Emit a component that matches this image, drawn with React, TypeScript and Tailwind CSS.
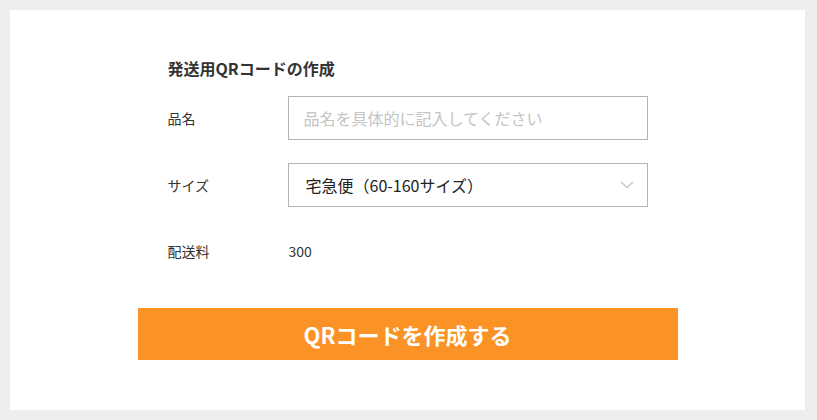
import React from 'react';

const font = { fontFamily: '"Noto Sans CJK JP", "Noto Sans", sans-serif' };

function Chevron() {
  return (
    <svg width="14" height="8" viewBox="0 0 14 8" className="shrink-0">
      <polyline points="1,1 7,6.5 13,1" fill="none" stroke="#c8c8c8" strokeWidth="1.5" />
    </svg>
  );
}

export default function App() {
  return (
    <div className="min-h-[420px] w-[817px] bg-[#eeeeee] pt-[10px] pl-[10px] pr-[12px] pb-[10px]" style={font}>
      <div className="bg-white h-[400px] flex flex-col items-center pt-[48px]">
        <div className="w-[480px]">
          <h2 className="text-[16px] leading-[20px] font-bold text-[#333]">発送用QRコードの作成</h2>

          <div className="mt-[18px] flex items-center h-[44px]">
            <div className="w-[120px] text-[14px] text-[#333]">品名</div>
            <input
              className="w-[360px] h-[44px] border border-[#b4b4b4] px-[15px] text-[16px] text-[#333] placeholder:text-[#c4c4c4] outline-none"
              placeholder="品名を具体的に記入してください"
            />
          </div>

          <div className="mt-[23px] flex items-center h-[44px]">
            <div className="w-[120px] text-[14px] text-[#333]">サイズ</div>
            <div className="w-[360px] h-[44px] border border-[#b4b4b4] pl-[17px] pr-[13px] flex items-center justify-between">
              <span className="text-[16px] text-[#222]">宅急便（60-160サイズ）</span>
              <Chevron />
            </div>
          </div>

          <div className="mt-[22px] flex items-center h-[44px]">
            <div className="w-[120px] text-[14px] text-[#333]">配送料</div>
            <div className="text-[14px] text-[#333] pl-[1px]">300</div>
          </div>
        </div>

        <button className="mt-[35px] w-[540px] h-[52px] bg-[#fb9225] text-white text-[22px] font-bold">
          QRコードを作成する
        </button>
      </div>
    </div>
  );
}
